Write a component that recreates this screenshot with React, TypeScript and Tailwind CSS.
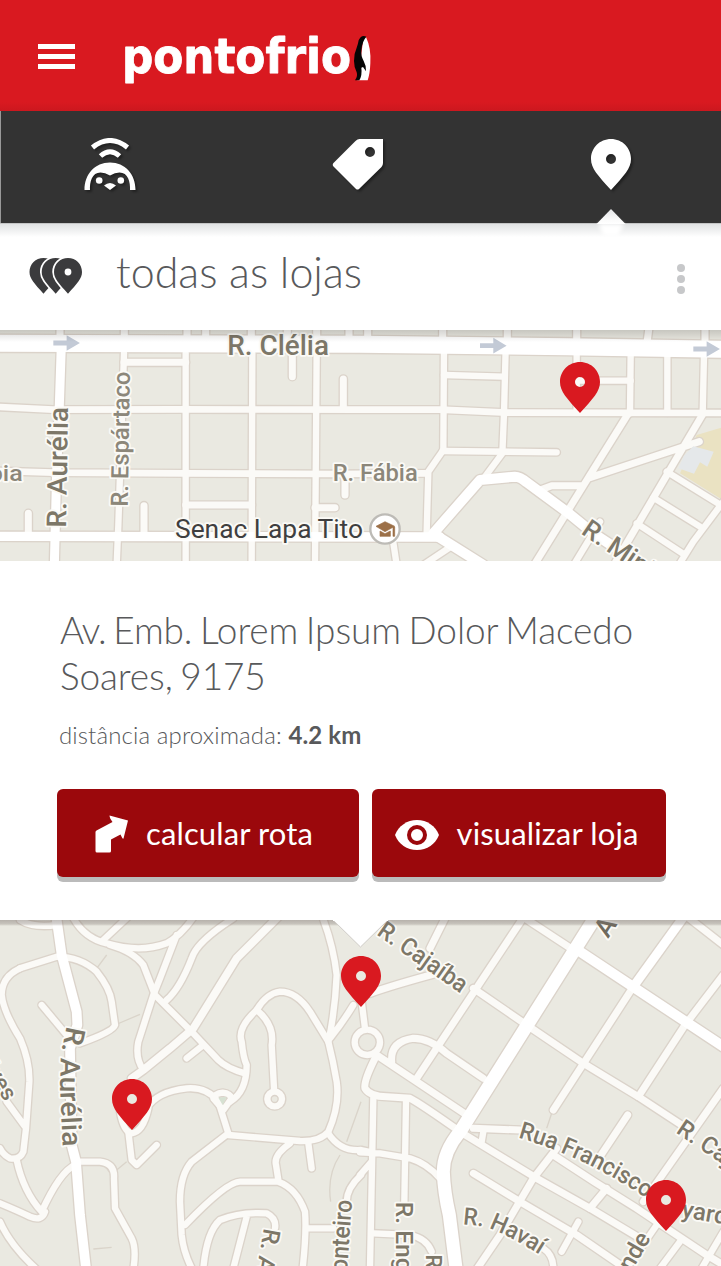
import React from "react";

type Road = { d: string; w?: number; major?: boolean };
type Shift = { roads: Road[]; dx: number };

const upperWest: Road[] = [
  { d: "M180 0V60M373 0V60M561 0V60M617 0V60M754 0V60M862 0V60M950 0V60M1047 0V60M1103 0V60", w: 20 },
  { d: "M0 246L160 254L540 253L1080 254L1320 254L1520 263L2170 264", w: 19 },
  { d: "M0 438L160 443L560 445L1000 447L1275 445", w: 19 },
  { d: "M372 85L355 600L350 720M557 85V720M757 85L755 720M950 85L945 720", w: 18 },
  { d: "M372 112H557M557 540H755M945 548H1005M1035 443V510M877 60V155M1030 250V162M432 634V542M85 630V565", w: 20 },
  { d: "M0 55L700 57L1080 58L1700 65L2170 73", w: 50, major: true },
  { d: "M0 634L600 635L1320 636", w: 27, major: true },
  { d: "M184 60L178 240L170 440L163 720", w: 26, major: true },
];

const upperEast: Road[] = [
  { d: "M248 0V60M442 0V60M650 0V60M868 0L860 60M1035 0V60", w: 20 },
  { d: "M252 60L250 375L205 440L200 620M437 70L432 265L427 385L375 455M650 70V263M812 90L810 265M922 90V263M1032 90L1028 265" },
  { d: "M252 150L430 155M650 167H812M248 378L590 382" },
  { d: "M805 265L690 450L510 740M1030 265L950 400L750 740M690 458L850 405L1018 350M540 495L575 482L665 482", w: 20 },
  { d: "M920 440L1090 545M880 518L1020 605M830 595L975 690M1090 530L1000 650L950 730M720 590L635 730" },
  { d: "M98 640L110 720M280 660L190 720", w: 18 },
  { d: "M220 625L360 465L465 455Q480 455 500 472L620 560L700 625L860 730M230 632L370 720", w: 29, major: true },
];

const lowerWest: Road[] = [
  { d: "M215 0Q250 70 320 85Q420 115 500 85Q545 60 585 0M390 0L310 75M530 60L480 190L460 240L415 380Q405 430 430 465" },
  { d: "M60 15Q100 40 170 30" },
  { d: "M330 90Q400 110 430 150L465 240L575 350L655 435Q680 460 735 475M700 10Q590 80 575 130Q540 220 500 255" },
  { d: "M840 0L710 130L580 340L510 400L430 465L395 490", w: 22 },
  { d: "M60 160L170 125Q240 125 290 170Q330 220 335 260L345 330Q340 350 240 385M125 270L200 360" },
  { d: "M60 160Q5 185 5 240Q10 290 60 370Q90 440 88 500L78 640L70 710Q60 735 30 730Q10 720 0 700M20 560L75 635" },
  { d: "M50 735Q70 830 125 890Q180 770 225 750M0 865Q60 890 90 905Q125 920 135 890M0 920Q30 990 110 1063" },
  { d: "M240 740L300 740Q345 745 342 790L345 880L395 970Q410 1000 400 1063M385 650L395 735L410 750L470 690" },
  { d: "M440 580Q470 530 560 520Q620 515 655 560L685 655L575 740Q540 780 540 860L545 960Q550 1010 575 1060" },
  { d: "M360 590Q370 650 395 655Q430 650 445 580M640 550Q645 535 668 533Q690 535 695 550L670 585Z" },
  { d: "M685 660L900 678Q960 680 985 650Q1020 570 1010 500Q1000 440 985 380L930 290Q890 230 840 230Q800 235 770 285Q710 340 725 380Q730 430 740 450Q740 530 690 560" },
  { d: "M770 285Q825 330 815 390L822 520M802 552a22 22 0 1 0 44 0a22 22 0 1 0-44 0M560 430L610 390" },
  { d: "M965 0Q1000 90 1010 180Q1005 290 985 380M1060 270Q1030 320 990 370M985 655Q1020 710 1083 705L1115 712" },
  { d: "M870 685Q820 720 828 750L835 795M925 685L935 760M555 930Q680 800 720 800L835 800Q890 820 915 890Q920 950 908 1060" },
  { d: "M610 1060Q620 950 660 915Q720 890 800 895Q830 910 825 940M740 905L700 1060M920 940H1000M1083 780Q1040 820 1040 860" },
  { d: "M168 0L185 120L230 290L232 330L210 400L215 690L228 740L240 900L258 1060", w: 28, major: true },
];

const lowerEast: Road[] = [
  { d: "M-16 382a38 38 0 1 0 76 0a38 38 0 1 0-76 0M5 260L15 340" },
  { d: "M260 0L210 100M495 0L170 490M30 235Q100 210 230 175M340 220L500 330L670 445L835 545L980 640", w: 20 },
  { d: "M50 420L320 600M45 430Q10 500 15 520Q30 545 80 545L150 550Q180 565 300 650L530 790L690 880L840 970", w: 20 },
  { d: "M40 550L30 1060M138 560L133 860M0 712L60 715L150 730Q200 745 240 790M0 780L35 740" },
  { d: "M95 440Q90 380 160 370Q210 370 260 415L370 490M480 0L640 105M820 215L580 585M975 0L1090 90", w: 20 },
  { d: "M1090 180L975 330L835 545M1090 520L900 790L850 860M340 640L480 645M803 600L710 740M740 820L690 880", w: 20 },
  { d: "M340 775L480 860L650 960L800 1063M590 700L520 790L420 960L350 1063M580 720Q700 800 830 880L1040 1020L1090 1050", w: 20 },
  { d: "M655 920L605 1010M890 930L800 1060M960 980L900 1060M1090 950L1025 1060M40 955L150 960Q200 970 215 1010M370 650L365 680M550 1000Q580 1020 580 1060" },
  { d: "M660 110L1090 395", w: 29, major: true },
  { d: "M975 0L820 215", w: 26, major: true },
  { d: "M710 0L300 650Q250 710 250 770Q252 830 268 900L288 1060", w: 38, major: true },
];

function Roads({ groups }: { groups: Shift[] }) {
  const pass = (major: boolean, casing: boolean) =>
    groups.map((g, i) => (
      <g key={i} transform={`translate(${g.dx} 0)`}>
        {g.roads
          .filter((r) => !!r.major === major)
          .map((r, j) => (
            <path
              key={j}
              d={r.d}
              fill="none"
              strokeLinecap="round"
              strokeLinejoin="round"
              stroke={casing ? "#dbd3ca" : major ? "#ffffff" : "#fbfaf7"}
              strokeWidth={(r.w ?? 18) + (casing ? 9 : 1)}
            />
          ))}
      </g>
    ));
  return (
    <>
      {pass(false, true)}
      {pass(true, true)}
      {pass(false, false)}
      {pass(true, false)}
    </>
  );
}

type LabelProps = { x: number; y: number; r?: number; size?: number; len?: number; color?: string; weight?: number; children: string };

function Label({ x, y, r = 0, size = 72, len, color = "#7d7768", weight = 500, children }: LabelProps) {
  return (
    <text
      transform={`translate(${x} ${y}) rotate(${r})`}
      fontFamily="Roboto, sans-serif"
      fontWeight={weight}
      fontSize={size}
      textLength={len}
      lengthAdjust="spacingAndGlyphs"
      fill={color}
      stroke="#fbfaf6"
      strokeWidth={11}
      strokeLinejoin="round"
      paintOrder="stroke"
    >
      {children}
    </text>
  );
}

function CurvedLabel({ id, d, size, len, children }: { id: string; d: string; size: number; len: number; children: string }) {
  return (
    <>
      <path id={id} d={d} fill="none" />
      <text
        fontFamily="Roboto, sans-serif"
        fontWeight={500}
        fontSize={size}
        fill="#7d7768"
        stroke="#fbfaf6"
        strokeWidth={11}
        strokeLinejoin="round"
        paintOrder="stroke"
      >
        <textPath href={`#${id}`} textLength={len} lengthAdjust="spacingAndGlyphs">
          {children}
        </textPath>
      </text>
    </>
  );
}

const dropPath = "M20 0C8.800 0 0 8.800 0 20C0 29.500 7 36.500 20 51C33 36.500 40 29.500 40 20C40 8.800 31.200 0 20 0Z";

function Pin({ className }: { className: string }) {
  return (
    <svg viewBox="0 0 40 51" className={className}>
      <path d={`${dropPath}M20 15a5 5 0 1 1 0 10a5 5 0 0 1 0-10Z`} fill="currentColor" fillRule="evenodd" />
    </svg>
  );
}

const arrow = "M0-4H14V-13L28 0L14 13V4H0Z";

function UpperMap() {
  return (
    <svg viewBox="0 15 2163 693" className="block h-full w-full">
      <rect y="0" width="2163" height="720" fill="#eae9e1" />
      <path d="M2090 330L2163 308V522L2040 445Z" fill="#eae2c2" />
      <Roads groups={[{ roads: upperWest, dx: 0 }, { roads: upperEast, dx: 1080 }]} />
      <path d="M2080 364L2141 380L2122 425L2100 412L2082 446L2035 430L2052 392Z" fill="#e5e8ea" />
      {[[160, 54], [1440, 62], [2080, 72]].map(([x, y]) => (
        <path key={x} d={arrow} transform={`translate(${x} ${y}) scale(2.85 1.8)`} fill="#c3cad6" />
      ))}
      <Label x={682} y={91} size={82} len={305}>R. Clélia</Label>
      <Label x={198} y={608} r={-89} size={82} len={362}>R. Aurélia</Label>
      <Label x={383} y={545} r={-89} size={72} len={405} color="#8c877a">R. Espártaco</Label>
      <Label x={-34} y={467} size={68} len={102} color="#8c877a">bia</Label>
      <Label x={998} y={467} size={70} len={255} color="#8c877a">R. Fábia</Label>
      <Label x={525} y={638} size={78} len={564} color="#3f3f3f" weight={400}>Senac Lapa Tito</Label>
      <Label x={1741} y={625} r={34} size={78}>R. Ministro</Label>
      <circle cx="1155" cy="612" r="44" fill="#fff" stroke="#bdbbb6" strokeWidth="7" />
      <path d="M1128 604L1155 590L1184 604L1155 620ZM1140 618L1155 626L1171 618V634H1140ZM1179 606H1184V634H1179Z" fill="#9c7048" stroke="#9c7048" strokeWidth="2" />
    </svg>
  );
}

function LowerMap() {
  return (
    <svg viewBox="0 15 2163 1038" className="block h-full w-full">
      <rect y="0" width="2163" height="1070" fill="#eae9e1" />
      <path d="M320 120L290 160M345 330L420 298M380 740L350 765M280 1002L335 997M1083 560L1040 680M1020 720Q980 780 992 860M1660 580L1640 640" fill="none" stroke="#dad4ca" strokeWidth="4" />
      <Roads groups={[{ roads: lowerWest, dx: 0 }, { roads: lowerEast, dx: 1080 }]} />
      <path d="M655 548L680 546L668 570Z" fill="#d6e1d2" />
      <CurvedLabel id="aurelia" d="M200 332L182 420L180 520L191 760" size={82} len={365}>R. Aurélia</CurvedLabel>
      <Label x={-50} y={458} r={58} size={68}>lves</Label>
      <Label x={792} y={938} r={100} size={72}>R. Albion</Label>
      <Label x={1041} y={1072} r={-86} size={74} len={217}>onteiro</Label>
      <Label x={1128} y={58} r={35} size={74} len={310}>R. Cajaíba</Label>
      <Label x={1824} y={72} r={-57} size={80} color="#6e6a5e">A</Label>
      <CurvedLabel id="francisco" d="M1554 668Q1740 720 1925 840L2100 930" size={72} len={428}>Rua Francisco</CurvedLabel>
      <Label x={2042} y={905} r={10} size={72}>yard</Label>
      <Label x={2026} y={652} r={34} size={72}>R. Cajaíba</Label>
      <CurvedLabel id="havai" d="M1388 928L1450 934Q1510 950 1640 1032" size={72} len={252}>R. Havaí</CurvedLabel>
      <Label x={1187} y={860} r={90} size={74}>R. Eng.</Label>
      <Label x={1278} y={1018} r={90} size={68}>R. F</Label>
      <Label x={1894} y={1072} r={-60} size={72}>nde</Label>
    </svg>
  );
}

function Penguin() {
  return (
    <svg viewBox="0 0 135 195" className="h-[65px] w-[45px]">
      <path d="M70 40L78 36Q94 70 91 115Q90 145 83 166H52L60 120Z" fill="#fff" />
      <path d="M79 35Q64 28 56 46Q54 58 50 68Q41 88 42 108Q42 126 50 142Q54 154 45 166H58Q67 150 64 128L69 126L78 139Q79 122 71 108Q62 92 64 75Q67 48 79 35Z" fill="#050505" />
    </svg>
  );
}

function PenguinSignal() {
  return (
    <svg viewBox="0 0 52 53" className="h-[53px] w-[52px] drop-shadow-[2px_2px_1px_rgba(0,0,0,0.35)]">
      <g fill="none" stroke="#fff" strokeWidth="5">
        <path d="M8.500 9.500Q26-4.500 43.500 9.500" />
        <path d="M16.500 18Q26 9.500 35.500 18" />
      </g>
      <path d="M.5 52C.5 36 11 24.500 26 24.500S51.500 36 51.500 52H46C46.500 44 44 34.500 35.500 34.500Q31 34.500 26 37.500Q21 34.500 16.500 34.500C8 34.500 5.500 44 6 52Z" fill="#fff" />
      <circle cx="15.200" cy="42.500" r="3.300" fill="#fff" />
      <circle cx="36.800" cy="42.500" r="3.300" fill="#fff" />
      <path d="M20 47.500Q26 42.500 32 47.500L26 52Z" fill="#fff" />
    </svg>
  );
}

const buttonBase = "flex h-[88px] items-center rounded-md bg-[#9b080c] text-[31px] leading-none tracking-[0.13px] whitespace-nowrap text-white shadow-[0_5px_0_#bbbbbb]";

export default function App() {
  return (
    <div className="flex h-[1266px] w-[721px] flex-col overflow-hidden bg-white font-['Lato',sans-serif]">
      <header className="flex h-[111px] shrink-0 items-start bg-[linear-gradient(#d91920_0,#d91920_102px,#cc171e_111px)] pl-[38px]">
        <button aria-label="Menu" className="mt-11 flex w-[37px] flex-col gap-[5px]">
          <span className="h-[5px] w-full bg-white" />
          <span className="h-[5px] w-full bg-white" />
          <span className="h-[5px] w-full bg-white" />
        </button>
        <svg viewBox="0 0 230 60" className="mt-[31px] ml-[48px] h-[60px] w-[230px] overflow-visible">
          <text x="-1" y="41.500" fontFamily="DejaVu Sans Condensed, DejaVu Sans, sans-serif" fontWeight="700" fontSize="48" textLength="229" lengthAdjust="spacingAndGlyphs" fill="#fff" stroke="#fff" strokeWidth=".8" strokeLinejoin="round">
            pontofrio
          </text>
        </svg>
        <div className="mt-[25px] -ml-[13px]">
          <Penguin />
        </div>
      </header>

      <nav className="relative flex h-[112px] shrink-0 border-l border-[#999999] bg-[#333333] text-white">
        <button className="mt-[27px] ml-[83px] h-[53px]">
          <PenguinSignal />
        </button>
        <button className="mt-7 ml-[196px] h-[52px]">
          <svg viewBox="0 0 52 52" className="h-[52px] w-[52px] drop-shadow-[2px_2px_1px_rgba(0,0,0,0.35)]">
            <path fillRule="evenodd" fill="#fff" d="M27.500 0H51V24Q51 26.500 49.500 28L27 50Q25.500 51.200 24 50L1.500 27.500Q0 25.500 1.500 24L23.500 2Q25.500 0 27.500 0ZM38 8a5 5 0 1 0 0 10a5 5 0 0 0 0-10Z" />
          </svg>
        </button>
        <button className="mt-7 ml-[207px] h-[51px]">
          <Pin className="h-[51px] w-10 drop-shadow-[2px_2px_1px_rgba(0,0,0,0.35)]" />
        </button>
      </nav>

      <section className="relative flex h-[107px] shrink-0 items-start bg-[linear-gradient(#a8a8a8_0,#e0e2e3_1px,#ffffff_14px)] text-[#58595b]">
        <svg viewBox="0 0 30 30" className="absolute -top-[14px] left-[596px] h-[30px] w-[30px]">
          <defs>
            <linearGradient id="tip" x1="0" y1="0" x2="0" y2="1">
              <stop offset="0" stopColor="#e4e5e7" />
              <stop offset=".7" stopColor="#fafafa" />
              <stop offset="1" stopColor="#ffffff" />
            </linearGradient>
          </defs>
          <path d="M0.500 15L15 0L29.500 15Z" fill="url(#tip)" />
          <path d="M2 15H28L22 27H8Z" fill="#fff" className="blur-[2px]" />
        </svg>
        <svg viewBox="0 0 54 38" className="mt-[34px] ml-[29px] h-[38px] w-[54px]">
          {[0.5, 12.7, 25].map((x) => (
            <path
              key={x}
              transform={`translate(${x} 1) scale(.7)`}
              d={dropPath}
              fill="#3b3b3d"
              stroke="#fff"
              strokeWidth="5"
              paintOrder="stroke"
            />
          ))}
          <circle cx="39" cy="15" r="3.400" fill="#fff" />
        </svg>
        <h1 className="mt-[23px] ml-[33px] w-[561px] text-[43px] leading-[52px] font-light whitespace-nowrap">todas as lojas</h1>
        <button aria-label="Mais" className="mt-[41px] flex flex-col gap-[3px]">
          <span className="size-2 rounded-full bg-[#c7c8ca]" />
          <span className="size-2 rounded-full bg-[#c7c8ca]" />
          <span className="size-2 rounded-full bg-[#c7c8ca]" />
        </button>
      </section>

      <section className="relative h-[231px] shrink-0">
        <UpperMap />
        <div className="absolute inset-x-0 top-0 h-3 bg-gradient-to-b from-black/15 to-transparent" />
        <Pin className="absolute top-[32px] left-[560px] h-[51px] w-10 text-[#d91920]" />
      </section>

      <section className="flex h-[359px] shrink-0 flex-col bg-white text-[#58595b]">
        <h2 className="mt-[46px] ml-[60px] text-[37px] leading-[46px] font-light tracking-[-0.1px] whitespace-nowrap [word-spacing:-2.300px]">
          <span className="tracking-[-1.1px]">Av.</span> Emb. Lorem Ipsum Dolor Macedo
          <br />
          Soares, 9175
        </h2>
        <p className="mt-[21px] ml-[59px] text-2xl leading-[30px] font-light tracking-[0.12px] whitespace-nowrap">
          distância aproximada: <b className="font-bold">4.2 km</b>
        </p>
        <div className="mt-[39px] ml-[57px] flex gap-[13px]">
          <button className={`${buttonBase} w-[302px] pl-[38px]`}>
            <svg viewBox="0 0 34 38" className="mt-px h-[38px] w-[34px]">
              <path d="M14.500 .5L33 5.500L28.500 23.500Q27.500 24 27 22.500L25.500 19.500L16 24.500V36Q16 37.500 14.500 37.500H2Q.5 37.500 .5 36V17Q.5 16 1.500 15.500L17.500 7Q14.500 3 14.500 .5Z" fill="#fff" />
            </svg>
            <span className="ml-[17px]">calcular rota</span>
          </button>
          <button className={`${buttonBase} w-[294px] pl-[23px]`}>
            <svg viewBox="0 0 44 32" className="mt-1 h-8 w-11">
              <path d="M22 1C12 1 3.500 7 0 16C3.500 25 12 31 22 31S40.500 25 44 16C40.500 7 32 1 22 1Z" fill="#fff" />
              <circle cx="22" cy="16" r="8" fill="#fff" stroke="#9b080c" strokeWidth="4" />
            </svg>
            <span className="ml-[17.5px]">visualizar loja</span>
          </button>
        </div>
      </section>

      <section className="relative h-[346px] shrink-0">
        <LowerMap />
        <div className="absolute inset-x-0 top-0 h-[6px] bg-[linear-gradient(rgba(120,110,105,0.45)_0,rgba(120,110,105,0.3)_4px,transparent_6px)]" />
        <svg viewBox="0 0 56 30" className="absolute top-0 left-[333px] h-[30px] w-14">
          <path d="M0 0L27.500 27L55 0Z" fill="#fff" stroke="#cfccc8" strokeWidth="1" />
          <path d="M0-1H55V1H0Z" fill="#fff" />
        </svg>
        <Pin className="absolute top-[36px] left-[341px] h-[51px] w-10 text-[#d91920]" />
        <Pin className="absolute top-[159px] left-[112px] h-[51px] w-10 text-[#d91920]" />
        <Pin className="absolute top-[260px] left-[646px] h-[51px] w-10 text-[#d91920]" />
      </section>
    </div>
  );
}
